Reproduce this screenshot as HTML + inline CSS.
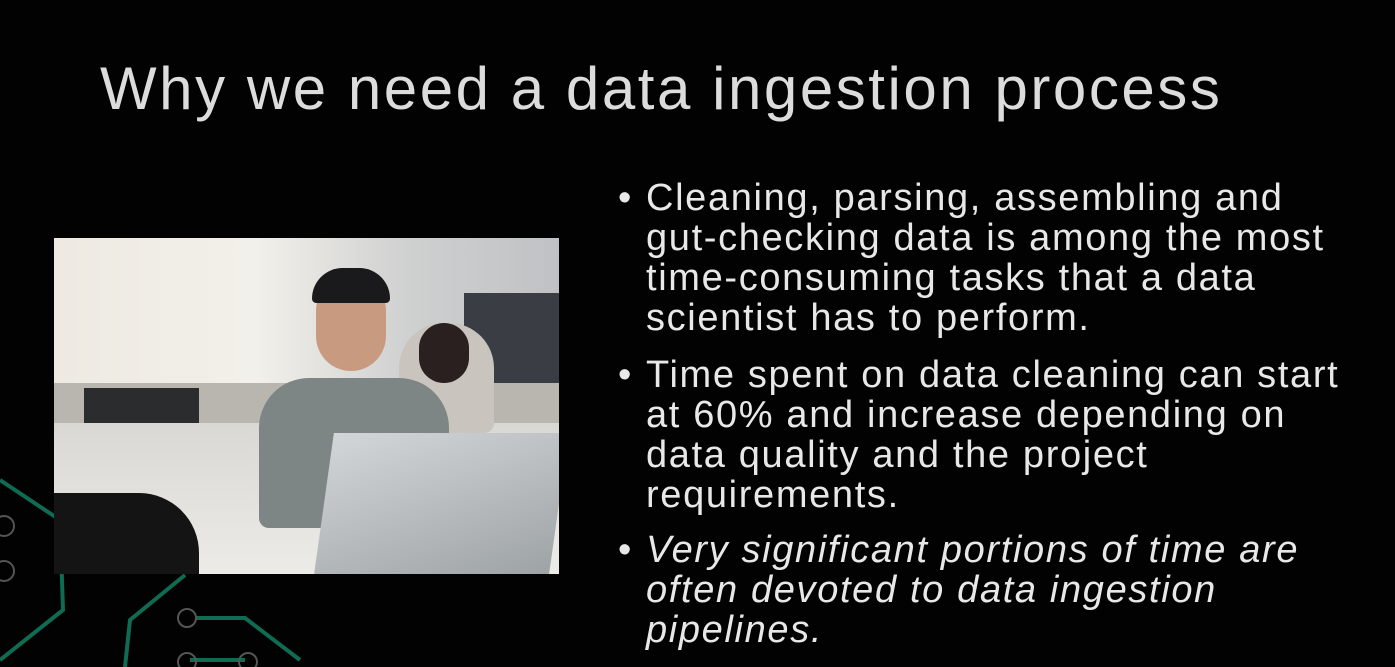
<!DOCTYPE html>
<html><head><meta charset="utf-8"><style>
body{margin:0;width:1395px;height:667px;background:#020203;overflow:hidden;position:relative;font-family:"Liberation Sans","DejaVu Sans",sans-serif;color:#e6e6e6}
h1{position:absolute;left:100px;top:54px;margin:0;font-weight:normal;font-size:60px;letter-spacing:2.55px;color:#dcdcdc}
.b{position:absolute;left:618px;font-size:38px;line-height:40px;letter-spacing:1.65px;color:#e8e8e8;white-space:nowrap}
.b p{margin:0;padding-left:28px;position:relative}
.b p::before{content:"•";position:absolute;left:0;top:0;font-style:normal}
.i{font-style:italic}
.photo{position:absolute;left:54px;top:238px;width:505px;height:336px;overflow:hidden;background:#d8d8d6}
.photo div{position:absolute}
</style></head><body>
<svg style="position:absolute;left:0;top:460px" width="340" height="207">
<g fill="none" stroke="#0f6b52" stroke-width="4">
<path d="M0 20 L60 60 L63 150 L0 200"/>
<path d="M185 115 L130 160 L125 207"/>
<path d="M195 158 L245 158 L300 200"/>
<path d="M190 200 L245 200"/>
</g>
<g fill="none" stroke="#555" stroke-width="2">
<circle cx="4" cy="66" r="10"/><circle cx="4" cy="111" r="10"/><circle cx="187" cy="158" r="9"/><circle cx="187" cy="202" r="9"/><circle cx="248" cy="202" r="9"/>
</g>
</svg>
<h1>Why we need a data ingestion process</h1>
<div class="photo">
<div style="left:0;top:0;width:505px;height:150px;background:linear-gradient(90deg,#eeeae2,#f2f0ea 40%,#cfd0d0 70%,#bfc2c4)"></div>
<div style="left:410px;top:55px;width:95px;height:120px;background:#3a3d44"></div>
<div style="left:0;top:145px;width:505px;height:40px;background:#b9b6b0"></div>
<div style="left:30px;top:150px;width:115px;height:95px;background:#2b2c2e"></div>
<div style="left:0;top:185px;width:505px;height:151px;background:linear-gradient(180deg,#d9d8d4,#ecebe7)"></div>
<div style="left:345px;top:85px;width:95px;height:110px;border-radius:45px 45px 10px 10px;background:#c9c4bd"></div>
<div style="left:365px;top:85px;width:50px;height:60px;border-radius:25px;background:#2a2020"></div>
<div style="left:205px;top:140px;width:190px;height:150px;border-radius:50px 50px 10px 10px;background:#7e8585"></div>
<div style="left:262px;top:38px;width:70px;height:95px;border-radius:35px;background:#c89a80"></div>
<div style="left:258px;top:30px;width:78px;height:35px;border-radius:35px 35px 5px 5px;background:#1a1a1c"></div>
<div style="left:0;top:255px;width:145px;height:81px;border-radius:0 60px 0 0;background:#141414"></div>
<div style="left:270px;top:195px;width:235px;height:141px;background:linear-gradient(160deg,#d3d6d8,#9ea3a6);transform:skewX(-8deg)"></div>
</div>
<div class="b" style="top:178px"><p>Cleaning, parsing, assembling and<br>gut-checking data is among the most<br>time-consuming tasks that a data<br>scientist has to perform.</p></div>
<div class="b" style="top:355px"><p>Time spent on data cleaning can start<br>at 60% and increase depending on<br>data quality and the project<br>requirements.</p></div>
<div class="b" style="top:530px"><p class="i">Very significant portions of time are<br>often devoted to data ingestion<br>pipelines.</p></div>
</body></html>
